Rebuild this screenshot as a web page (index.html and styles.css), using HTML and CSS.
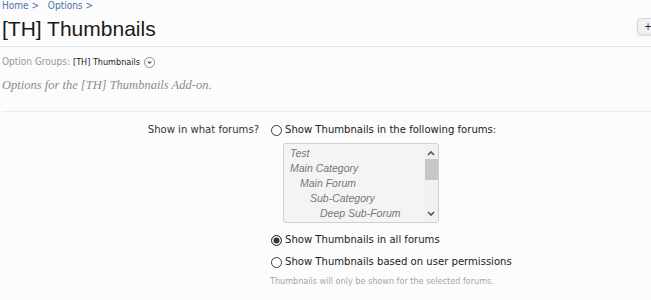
FILE: index.html
```html
<!DOCTYPE html>
<html lang="en">
<head>
    <meta charset="UTF-8">
    <title>[TH] Thumbnails - Options</title>
    <link rel="stylesheet" href="styles.css">
</head>
<body>
    <div class="page">
        <div class="breadcrumb">
            <a href="#">Home</a> <span class="arrow">&gt;</span>
            <a href="#">Options</a> <span class="arrow">&gt;</span>
        </div>

        <div class="titleBar">
            <h1>[TH] Thumbnails</h1>
            <a class="topButton" href="#">+ Add Option</a>
        </div>

        <div class="optionGroups">
            <span class="muted">Option Groups:</span>
            <span class="current">[TH] Thumbnails</span>
            <span class="menuIcon">
                <svg width="11" height="11" viewBox="0 0 11 11">
                    <circle cx="5.5" cy="5.5" r="5" fill="#fff" stroke="#8a8a8a" stroke-width="1"/>
                    <path d="M3 4.5 L8 4.5 L5.5 7.2 Z" fill="#6a6a6a"/>
                </svg>
            </span>
        </div>

        <p class="description">Options for the [TH] Thumbnails Add-on.</p>

        <form class="optionForm">
            <div class="formRow">
                <div class="rowLabel">Show in what forums?</div>
                <div class="rowControls">
                    <label class="choice">
                        <input type="radio" name="th_forums" value="selected">
                        <span>Show Thumbnails in the following forums:</span>
                    </label>

                    <div class="forumList">
                        <ul>
                            <li class="depth0">Test</li>
                            <li class="depth0">Main Category</li>
                            <li class="depth1">Main Forum</li>
                            <li class="depth2">Sub-Category</li>
                            <li class="depth3">Deep Sub-Forum</li>
                        </ul>
                        <div class="scrollbar">
                            <span class="scrollArrow">
                                <svg width="8" height="6" viewBox="0 0 8 6"><path d="M1 5 L4 2 L7 5" fill="none" stroke="#555" stroke-width="1.6"/></svg>
                            </span>
                            <span class="scrollThumb"></span>
                            <span class="scrollArrow down">
                                <svg width="8" height="6" viewBox="0 0 8 6"><path d="M1 1 L4 4 L7 1" fill="none" stroke="#555" stroke-width="1.6"/></svg>
                            </span>
                        </div>
                    </div>

                    <label class="choice spaced">
                        <input type="radio" name="th_forums" value="all" checked>
                        <span>Show Thumbnails in all forums</span>
                    </label>
                    <label class="choice">
                        <input type="radio" name="th_forums" value="permissions">
                        <span>Show Thumbnails based on user permissions</span>
                    </label>

                    <p class="hint">Thumbnails will only be shown for the selected forums.</p>
                </div>
            </div>
        </form>
    </div>
</body>
</html>
```

FILE: styles.css
```css
html, body {
    margin: 0;
    padding: 0;
}
body {
    background-color: #fcfcfd;
    color: #333;
    font-family: "DejaVu Sans Condensed", "DejaVu Sans", sans-serif;
    width: 651px;
    height: 300px;
    overflow: hidden;
}
.page {
    padding: 0 0 0 2px;
}
.breadcrumb {
    font-family: "DejaVu Sans Condensed", sans-serif;
    font-size: 10px;
    line-height: 11px;
    height: 10px;
    color: #4b72a3;
}
.breadcrumb a {
    color: #4b72a3;
    text-decoration: none;
}
.breadcrumb .arrow {
    margin-right: 6px;
}
.titleBar {
    display: flex;
    justify-content: space-between;
    align-items: flex-start;
    margin-top: 7px;
    padding-bottom: 5px;
    border-bottom: 1px solid #d6ebef;
    margin-left: -2px;
    padding-left: 2px;
}
h1 {
    margin: 0;
    font-family: "Liberation Sans", Arial, sans-serif;
    font-weight: normal;
    font-size: 21px;
    line-height: 24px;
    color: #1a1a1a;
}
.topButton {
    margin-top: 1px;
    margin-right: -61px;
    height: 15px;
    padding: 0 6px;
    font-size: 10px;
    line-height: 15px;
    color: #222;
    text-decoration: none;
    background-color: #f1f1f3;
    border: 1px solid #d8d8dc;
    border-radius: 4px;
    box-shadow: 0 1px 2px rgba(0, 0, 0, 0.12);
    white-space: nowrap;
}
.optionGroups {
    display: flex;
    align-items: center;
    gap: 3px;
    margin-top: 8px;
    font-size: 10px;
    line-height: 14px;
}
.optionGroups .muted {
    color: #999;
}
.optionGroups .current {
    font-size: 9px;
    color: #222;
}
.menuIcon {
    display: flex;
    margin-left: 1px;
}
.description {
    margin: 8px 0 0;
    font-family: "Liberation Serif", "DejaVu Serif", serif;
    font-style: italic;
    font-size: 12.5px;
    line-height: 16px;
    color: #8c8c8c;
    padding-bottom: 18px;
    border-bottom: 1px solid #e6eff0;
}
.optionForm {
    margin-top: 11px;
}
.formRow {
    display: grid;
    grid-template-columns: 257px 1fr;
    column-gap: 12px;
}
.rowLabel {
    text-align: right;
    font-size: 11.2px;
    line-height: 14px;
    color: #333;
}
.rowControls {
    display: flex;
    flex-direction: column;
    align-items: flex-start;
}
.choice {
    display: flex;
    align-items: center;
    gap: 3px;
    font-size: 11.2px;
    line-height: 14px;
    color: #222;
}
.choice.spaced {
    margin-top: 10px;
}
.choice + .choice {
    margin-top: 8px;
}
.choice input {
    appearance: none;
    margin: 0;
    width: 11px;
    height: 11px;
    border: 1px solid #3a3a3a;
    border-radius: 50%;
    background-color: #fff;
    box-sizing: border-box;
}
.choice input:checked {
    background-color: #333;
    box-shadow: inset 0 0 0 1.5px #fff;
}
.forumList {
    display: flex;
    margin: 6px 0 0 12px;
    width: 156px;
    height: 80px;
    box-sizing: border-box;
    border: 1px solid #cfcfcf;
    border-radius: 3px;
    background-color: #f4f4f4;
    overflow: hidden;
}
.forumList ul {
    flex: 1;
    list-style: none;
    margin: 0;
    padding: 2px 0 0 6px;
    font-family: "Liberation Sans", Arial, sans-serif;
    font-style: italic;
    font-size: 10.5px;
    line-height: 15px;
    color: #777;
    white-space: nowrap;
}
.forumList .depth1 { padding-left: 10px; }
.forumList .depth2 { padding-left: 20px; }
.forumList .depth3 { padding-left: 30px; }
.scrollbar {
    width: 14px;
    display: flex;
    flex-direction: column;
    align-items: center;
    background-color: #f1f1f1;
}
.scrollArrow {
    display: flex;
    height: 13px;
    align-items: center;
    justify-content: center;
    margin-top: 2px;
}
.scrollArrow.down {
    margin-top: auto;
    margin-bottom: 2px;
}
.scrollThumb {
    width: 13px;
    height: 21px;
    background-color: #c6c6c6;
}
.hint {
    margin: 6px 0 0 -1px;
    font-size: 9px;
    line-height: 12px;
    color: #a6a6a6;
}
```
